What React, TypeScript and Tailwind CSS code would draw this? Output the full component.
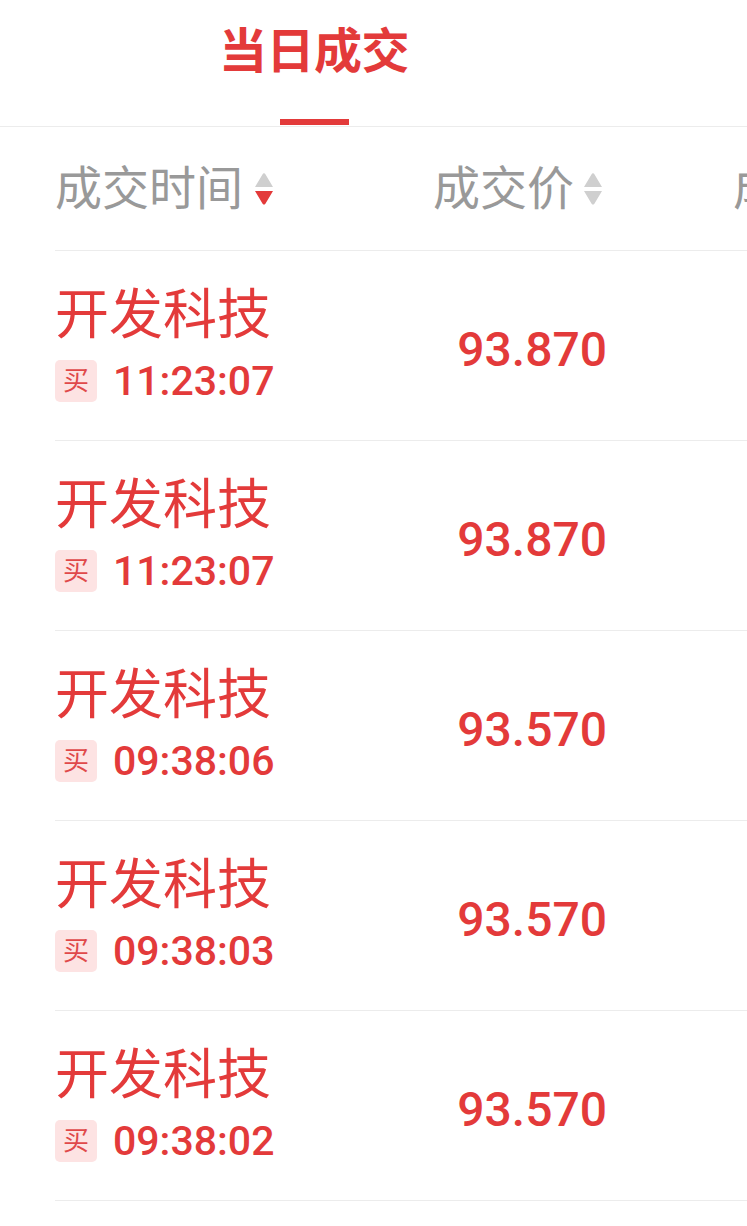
import React from 'react'

interface Trade {
  name: string
  side: string
  time: string
  price: string
}

const trades: Trade[] = [
  { name: '开发科技', side: '买', time: '11:23:07', price: '93.870' },
  { name: '开发科技', side: '买', time: '11:23:07', price: '93.870' },
  { name: '开发科技', side: '买', time: '09:38:06', price: '93.570' },
  { name: '开发科技', side: '买', time: '09:38:03', price: '93.570' },
  { name: '开发科技', side: '买', time: '09:38:02', price: '93.570' },
]

const font = "font-['Roboto','Noto_Sans_CJK_SC',sans-serif]"

function SortIcon({ active }: { active?: 'up' | 'down' }) {
  return (
    <svg width="18" height="34" viewBox="0 0 18 34" className="shrink-0">
      <path
        d="M7.6 1.2a1.6 1.6 0 0 1 2.8 0L18 14H0Z"
        fill={active === 'up' ? '#e33a3a' : '#cfcfcf'}
      />
      <path
        d="M0 18h18l-7.6 12.8a1.6 1.6 0 0 1-2.8 0Z"
        fill={active === 'down' ? '#e33a3a' : '#cfcfcf'}
      />
    </svg>
  )
}

export default function App() {
  return (
    <div className={`w-[747px] h-[1226px] overflow-hidden bg-white ${font}`}>
      {/* Tab bar */}
      <div className="h-[127px] border-b border-[#ececec] flex">
        <div className="ml-[217px] w-[194px] flex flex-col items-center">
          <div className="mt-[24px] text-[48px] leading-[56px] font-bold text-[#e33a3a] tracking-[-0.5px]">
            当日成交
          </div>
          <div className="mt-auto mb-px w-[69px] h-[6px] bg-[#e33a3a]" />
        </div>
      </div>

      {/* Table */}
      <div className="ml-[55px] w-[900px]">
        {/* Header */}
        <div className="h-[124px] border-b border-[#ececec] flex items-center text-[#999999] text-[47px] leading-none">
          <div className="w-[325px] shrink-0 flex items-center">
            <span>成交时间</span>
            <span className="ml-[12px] mt-[2px]">
              <SortIcon active="down" />
            </span>
          </div>
          <div className="w-[227px] shrink-0 flex items-center justify-end pr-[5px]">
            <span>成交价</span>
            <span className="ml-[10px] mt-[2px]">
              <SortIcon />
            </span>
          </div>
          <div className="ml-[126px] shrink-0 whitespace-nowrap">成交量</div>
        </div>

        {/* Rows */}
        {trades.map((t, i) => (
          <div key={i} className="h-[190px] border-b border-[#ececec] flex items-center">
            <div className="w-[325px] shrink-0 flex flex-col">
              <div className="text-[54px] leading-none text-[#e33a3a]">{t.name}</div>
              <div className="mt-[17px] flex items-center">
                <span className="w-[42px] h-[42px] rounded-[5px] bg-[#fde3e3] text-[#e0494a] text-[26px] leading-none flex items-center justify-center">
                  {t.side}
                </span>
                <span className="ml-[16px] text-[41px] leading-none font-medium text-[#e33a3a]">{t.time}</span>
              </div>
            </div>
            <div className="w-[227px] shrink-0 flex justify-end mt-[8px]">
              <span className="text-[48px] leading-none font-medium text-[#e33a3a]">{t.price}</span>
            </div>
          </div>
        ))}
      </div>
    </div>
  )
}
